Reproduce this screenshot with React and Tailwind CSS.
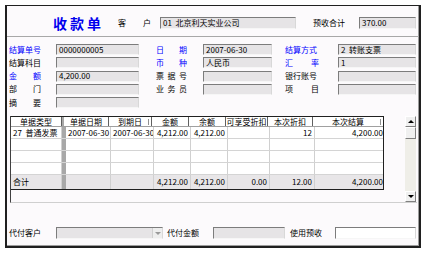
import React from "react";

const formRows = [
  [
    { t: "结算单号", blue: true, v: "0000000005" },
    { t: "日 期", blue: true, v: "2007-06-30" },
    { t: "结算方式", blue: true, v: "2  转账支票" },
  ],
  [
    { t: "结算科目", v: "" },
    { t: "币 种", blue: true, v: "人民币" },
    { t: "汇 率", blue: true, v: "1" },
  ],
  [
    { t: "金 额", blue: true, v: "4,200.00" },
    { t: "票 据 号", v: "" },
    { t: "银行账号", v: "" },
  ],
  [{ t: "部 门" }, { t: "业 务 员" }, { t: "项 目" }],
  [{ t: "摘 要" }],
];

const cols = ["w-[51px]", "w-[2px]", "w-[45px]", "w-[43px]", "w-[37px]", "w-[37px]", "w-[42px]", "w-[45px]", "w-[70px]"];

const headers = ["单据类型", "", "单据日期", "到期日", "金额", "余额", "可享受折扣", "本次折扣", "本次结算"];

const dataRows = [
  [{ v: "27  普通发票" }, {}, { v: "2007-06-30" }, { v: "2007-06-30" }, { v: "4,212.00", r: true }, { v: "4,212.00", r: true }, { v: "" }, { v: "12", r: true }, { v: "4,200.00", r: true }],
  [],
  [],
  [],
];

const totalRow = ["合计", "", "", "", "4,212.00", "4,212.00", "0.00", "12.00", "4,200.00"];

function Label({ text, blue, box = "w-[47px]", span = "w-[32px]" }) {
  return (
    <div className={`${box} shrink-0 flex`}>
      <div className={`${span} flex justify-between ${blue ? "text-[#0000ff]" : "text-black"}`}>
        {text.split(" ").map((c, i) => (
          <span key={i}>{c}</span>
        ))}
      </div>
    </div>
  );
}

function Field({ value = "", w, white, h = "h-[11px]" }) {
  return (
    <div
      className={`${w} ${h} shrink-0 flex items-center pl-[2px] overflow-hidden whitespace-pre border border-t-[#7c7c7c] border-l-[#7c7c7c] border-r-[#d8d8d8] border-b-[#f6f6f6] ${
        white ? "bg-white" : "bg-[#e6e4e6]"
      }`}>
      {value}
    </div>
  );
}

function ScrollBtn({ up }) {
  return (
    <div className="h-[11px] shrink-0 flex items-center justify-center bg-[#f0f0f0] border border-t-white border-l-white border-r-[#808080] border-b-[#808080]">
      <div
        className={`w-0 h-0 border-l-[3px] border-r-[3px] border-l-transparent border-r-transparent ${
          up ? "border-b-[3px] border-b-black" : "border-t-[3px] border-t-black"
        }`}
      />
    </div>
  );
}

export default function App() {
  return (
    <div className="w-[426px] h-[253px] bg-white pt-[5px] pl-[5px] font-['Noto_Sans_CJK_SC','Noto_Sans',sans-serif] text-[8px] leading-none text-black">
      <div className="w-[416px] h-[243px] bg-[#fcfafc] border-l-2 border-t border-r-2 border-b-2 border-[#202020] shadow-[inset_-1px_-1px_0_#9c9c9c] flex flex-col">
        {/* header */}
        <div className="h-[31px] shrink-0 flex items-center pt-[3px] border-b border-[#a8a8a8]">
          <div className="ml-[46px] w-[54px] text-[14px] font-bold tracking-[3px] text-[#0000ee]">收款单</div>
          <Label text="客 户" box="ml-[11px] w-[42px]" span="w-[33px]" />
          <Field w="w-[136px]" h="h-[12px]" value="01  北京利天实业公司" />
          <div className="ml-[17px] w-[46px]">预收合计</div>
          <Field w="w-[57px]" h="h-[12px]" value="370.00" />
        </div>

        {/* form */}
        <div className="mt-[7px] pl-[2px] flex flex-col gap-[2.25px]">
          {formRows.map((row, i) => (
            <div key={i} className="flex items-center">
              <Label text={row[0].t} blue={row[0].blue} />
              <Field w="w-[83px]" value={row[0].v} />
              {row[1] && (
                <>
                  <Label text={row[1].t} blue={row[1].blue} box="ml-[17px] w-[47px]" span="w-[31px]" />
                  <Field w="w-[69px]" value={row[1].v} />
                  <Label text={row[2].t} blue={row[2].blue} box="ml-[13px] w-[53px]" span="w-[34px]" />
                  <Field w="w-[78px]" value={row[2].v} />
                </>
              )}
            </div>
          ))}
        </div>

        {/* grid */}
        <div className="mt-[8px] ml-[3px] w-[407px] h-[87px] shrink-0 flex border-l border-b border-l-[#404040] border-b-[#cfcfcf]">
          <div className="w-[373px] self-start flex flex-col border-t border-r border-b border-[#202020] bg-white">
            <div className="h-[10px] flex border-b border-[#a0a0a0]">
              {headers.map((h, i) => (
                <div
                  key={i}
                  className={`${cols[i]} shrink-0 relative flex items-center justify-center ${
                    i === 1 ? "bg-[#a8a8a8]" : i < 8 ? "border-r border-[#606060]" : ""
                  }`}>
                  {h}
                  {(i === 3 || i === 8) && (
                    <span className="absolute right-[2px] top-[2px] w-[1px] h-[6px] bg-[#909090]" />
                  )}
                </div>
              ))}
            </div>
            {dataRows.map((row, r) => (
              <div key={r} className="h-[12px] flex border-b border-[#d4d4d4]">
                {cols.map((c, i) => (
                  <div
                    key={i}
                    className={`${c} shrink-0 flex items-center px-[2px] overflow-hidden whitespace-pre ${
                      row[i] && row[i].r ? "justify-end" : ""
                    } ${i === 1 ? "bg-[#a8a8a8] px-0" : i < 8 ? "border-r border-[#d0d0d0]" : ""}`}>
                    {row[i] ? row[i].v : ""}
                  </div>
                ))}
              </div>
            ))}
            <div className="h-[14px] flex bg-[#e8e6e8]">
              {totalRow.map((v, i) => (
                <div
                  key={i}
                  className={`${cols[i]} shrink-0 flex items-center px-[2px] ${i >= 4 ? "justify-end" : ""} ${
                    i === 1 ? "bg-[#a8a8a8] px-0" : i < 8 ? "border-r border-[#d0d0d0]" : ""
                  }`}>
                  {v}
                </div>
              ))}
            </div>
          </div>
          <div className="ml-auto mr-[1px] w-[11px] h-[86px] flex flex-col bg-[#efeee8]">
            <ScrollBtn up />
            <div className="h-[12px] shrink-0 bg-[#f0f0f0] border border-t-white border-l-white border-r-[#808080] border-b-[#808080]" />
            <div className="flex-1" />
            <ScrollBtn />
          </div>
        </div>

        {/* bottom */}
        <div className="mt-[24px] pl-[2px] flex items-center">
          <div className="w-[47px] shrink-0">代付客户</div>
          <div className="w-[107px] h-[12px] shrink-0 flex border border-t-[#7c7c7c] border-l-[#7c7c7c] border-r-[#d8d8d8] border-b-[#f6f6f6] bg-[#e6e4e6]">
            <div className="flex-1" />
            <div className="w-[10px] flex items-center justify-center bg-[#eeeeee] border-l border-[#d0d0d0]">
              <div className="w-0 h-0 border-l-[3px] border-r-[3px] border-t-[3px] border-l-transparent border-r-transparent border-t-[#9a9a9a]" />
            </div>
          </div>
          <div className="w-[50px] shrink-0 pl-[4px]">代付金额</div>
          <Field w="w-[72px]" h="h-[12px]" />
          <div className="w-[50px] shrink-0 pl-[5px]">使用预收</div>
          <Field w="w-[81px]" h="h-[12px]" white />
        </div>
      </div>
    </div>
  );
}
